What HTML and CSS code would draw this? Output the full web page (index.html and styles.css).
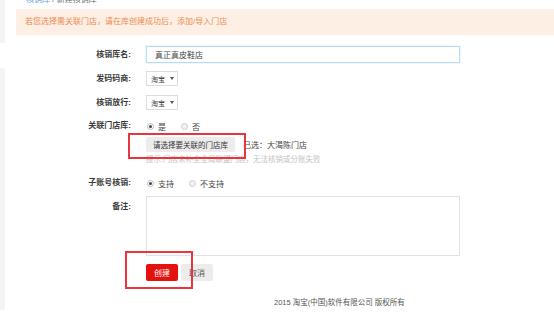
FILE: index.html
```html
<!DOCTYPE html>
<html lang="zh-CN">
<head>
  <meta charset="UTF-8">
  <title>新建核销库</title>
  <link rel="stylesheet" href="styles.css">
</head>
<body>
  <div class="page">
    <aside class="side">
      <div class="side-top"></div>
      <div class="side-bottom"></div>
    </aside>
    <main class="main">
      <div class="crumbs"><a class="crumb-link">核销库</a> / <span>新建核销库</span></div>
      <div class="alert">若您选择需关联门店，请在库创建成功后，添加/导入门店</div>

      <form class="form">
        <div class="row row-name">
          <label class="label">核销库名:</label>
          <div class="control"><input class="text-input" type="text" value="真正真皮鞋店"></div>
        </div>
        <div class="row row-sel">
          <label class="label">发码码商:</label>
          <div class="control"><span class="select">淘宝<i class="caret"></i></span></div>
        </div>
        <div class="row row-sel">
          <label class="label">核销放行:</label>
          <div class="control"><span class="select">淘宝<i class="caret"></i></span></div>
        </div>
        <div class="row row-store">
          <label class="label">关联门店库:</label>
          <div class="control">
            <div class="radios">
              <span class="radio on"></span><span class="radio-text">是</span>
              <span class="radio"></span><span class="radio-text">否</span>
            </div>
            <div class="pick">
              <button type="button" class="btn-pick">请选择要关联的门店库</button>
              <span class="picked">已选：大渴陈门店</span>
            </div>
            <p class="hint">提示:门店未补全全局联盟门店，无法核销或分账失败</p>
          </div>
        </div>
        <div class="row row-sub">
          <label class="label">子账号核销:</label>
          <div class="control radios">
            <span class="radio on"></span><span class="radio-text">支持</span>
            <span class="radio"></span><span class="radio-text">不支持</span>
          </div>
        </div>
        <div class="row row-note">
          <label class="label">备注:</label>
          <div class="control"><textarea class="note"></textarea></div>
        </div>
        <div class="row row-actions">
          <span class="label"></span>
          <div class="control">
            <button type="button" class="btn btn-create">创建</button>
            <button type="button" class="btn btn-cancel">取消</button>
          </div>
        </div>
      </form>

      <footer class="footer">2015 淘宝(中国)软件有限公司 版权所有</footer>
    </main>
  </div>

  <!-- red marks drawn on top of the screenshot -->
  <div class="mark mark-pick"></div>
  <div class="mark mark-create"></div>
</body>
</html>
```

FILE: styles.css
```css
* {
  box-sizing: border-box;
}
body {
  margin: 0;
  background: #fff;
  font-family: "Liberation Sans", "Noto Sans CJK SC", sans-serif;
  font-size: 8px;
  color: #333;
  width: 554px;
  height: 312px;
  overflow: hidden;
}
.page {
  display: flex;
}
.side {
  width: 5px;
  flex: none;
  display: flex;
  flex-direction: column;
}
.side-top {
  height: 43px;
  background: #f4f4f4;
}
.side-bottom {
  margin-top: 25px;
  height: 242px;
  background: #f4f4f4;
}
.main {
  flex: 1;
  margin-left: 11px;
}
.crumbs {
  height: 9px;
  margin-top: -5px;
  margin-bottom: 5px;
  padding-left: 10px;
  line-height: 9px;
  color: #666;
}
.crumb-link {
  color: #5a9be0;
}
.alert {
  height: 26px;
  line-height: 26px;
  padding-left: 9px;
  background: #fdefe3;
  color: #ec8c55;
  margin-bottom: 11px;
}
.form {
  margin: 0;
}
.row {
  display: flex;
  align-items: flex-start;
}
.label {
  width: 115px;
  flex: none;
  text-align: right;
  font-weight: bold;
  color: #3a3a3a;
  margin-right: 15px;
}
.control {
  flex: none;
}
.row-name {
  height: 17px;
  margin-bottom: 8px;
}
.row-name .label {
  line-height: 17px;
}
.text-input {
  width: 314px;
  height: 17px;
  border: 1px solid #b7dcf4;
  box-shadow: 0 0 2px #cfe8fa;
  padding: 0 8px;
  font: inherit;
  color: #444;
  outline: none;
}
.row-sel {
  height: 15px;
  margin-bottom: 9px;
}
.row-sel .label {
  line-height: 15px;
}
.select {
  display: inline-flex;
  align-items: center;
  width: 32px;
  height: 15px;
  border: 1px solid #ddd;
  padding-left: 4px;
  color: #444;
  font-size: 7px;
}
.caret {
  margin-left: 5px;
  width: 0;
  height: 0;
  border-left: 2px solid transparent;
  border-right: 2px solid transparent;
  border-top: 3px solid #555;
}
.row-store {
  margin-bottom: 11px;
}
.row-store .label {
  line-height: 14px;
}
.radios {
  display: flex;
  align-items: center;
  height: 14px;
}
.radio {
  width: 7px;
  height: 7px;
  border-radius: 50%;
  border: 1px solid #ccc;
  background: #f2f2f2;
  margin-left: 1px;
  margin-right: 4px;
  position: relative;
}
.radio.on {
  background: #fff;
  border-color: #bbb;
}
.radio.on::after {
  content: "";
  position: absolute;
  left: 1px;
  top: 1px;
  width: 3px;
  height: 3px;
  border-radius: 50%;
  background: #444;
}
.radio-text {
  margin-right: 14px;
  color: #444;
}
.pick {
  display: flex;
  align-items: center;
  margin-top: 4px;
}
.btn-pick {
  width: 89px;
  height: 15px;
  border: none;
  border-radius: 2px;
  background: #ececec;
  color: #333;
  font: inherit;
  font-size: 7.5px;
  padding: 0;
}
.picked {
  margin-left: 8px;
  color: #444;
}
.hint {
  margin: 3px 0 0;
  line-height: 10px;
  color: #c4c4c4;
  font-size: 7.5px;
}
.row-sub {
  margin-bottom: 6px;
}
.row-sub .label {
  line-height: 14px;
}
.row-note {
  margin-bottom: 8px;
}
.row-note .label {
  padding-top: 4px;
}
.note {
  display: block;
  width: 314px;
  height: 60px;
  border: 1px solid #e2e2e2;
  resize: none;
  font: inherit;
}
.row-actions .control {
  display: flex;
  gap: 3px;
}
.btn {
  width: 32px;
  height: 17px;
  border: none;
  border-radius: 2px;
  font: inherit;
  padding: 0;
}
.btn-create {
  background: #e3120f;
  color: #fff;
}
.btn-cancel {
  background: #ececec;
  color: #555;
}
.footer {
  margin-top: 17px;
  padding-left: 258px;
  line-height: 10px;
  color: #555;
  font-size: 7.5px;
}
.mark {
  position: absolute;
  border: 2px solid #e8363c;
}
.mark-pick {
  left: 128px;
  top: 133px;
  width: 118px;
  height: 26px;
}
.mark-create {
  left: 125px;
  top: 251px;
  width: 68px;
  height: 38px;
}
```
